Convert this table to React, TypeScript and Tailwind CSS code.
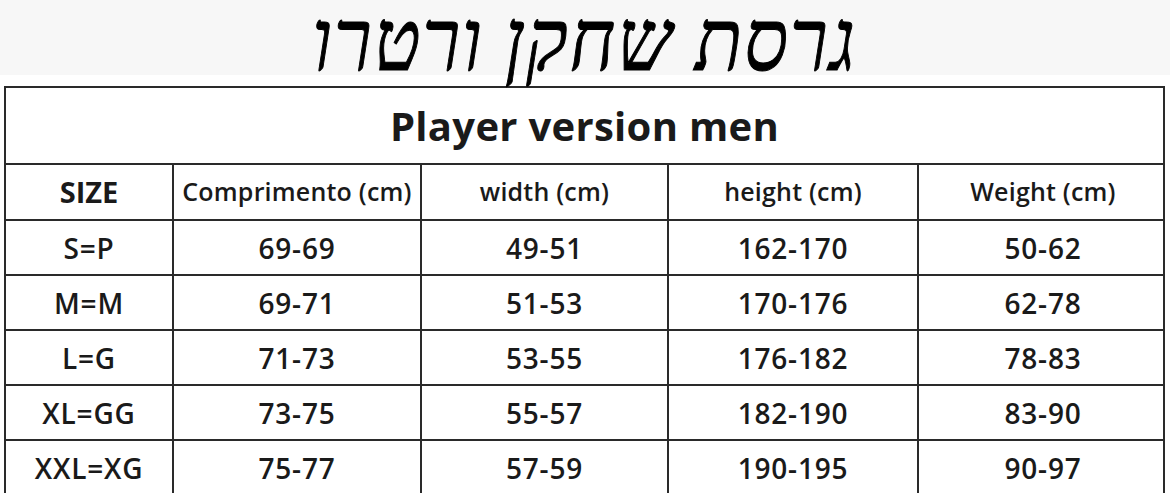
import React from "react";

const rows = [
  ["S=P", "69-69", "49-51", "162-170", "50-62"],
  ["M=M", "69-71", "51-53", "170-176", "62-78"],
  ["L=G", "71-73", "53-55", "176-182", "78-83"],
  ["XL=GG", "73-75", "55-57", "182-190", "83-90"],
  ["XXL=XG", "75-77", "57-59", "190-195", "90-97"],
];

const headers = ["Comprimento (cm)", "width (cm)", "height (cm)", "Weight (cm)"];

const cols = "grid grid-cols-[168px_248px_247px_250px_248px]";

const App = () => {
  return (
    <div className="w-[1170px] h-[493px] overflow-hidden bg-white font-['Open_Sans',sans-serif] text-[#1a1a1a]">
      {/* grey band is only 75px tall, the title's descenders run into the white below */}
      <div className="h-[86px] bg-[linear-gradient(#f7f7f7_75px,#ffffff_75px)] flex items-start justify-center">
        <h1
          dir="rtl"
          className="text-[86px] leading-[82px] italic font-['Liberation_Serif','DejaVu_Serif',serif] text-black tracking-[2px] scale-x-[0.9] [-webkit-text-stroke:1px_black]"
        >
          גרסת שחקן ורטרו
        </h1>
      </div>

      <div className="ml-[4px] w-[1161px] border-2 border-[#2a2a2a] border-b-0">
        <div className="h-[77px] flex items-center justify-center border-b-2 border-[#2a2a2a]">
          <span className="text-[40px] font-bold tracking-[0.3px]">Player version men</span>
        </div>

        <div className={`${cols} h-[56px] border-b-2 border-[#2a2a2a]`}>
          <div className="flex items-center justify-center border-r-2 border-[#2a2a2a] text-[29px] font-bold">
            SIZE
          </div>
          {headers.map((h, i) => (
            <div
              key={h}
              className={`flex items-center justify-center text-[25px] font-semibold tracking-[0.2px] ${
                i < headers.length - 1 ? "border-r-2 border-[#2a2a2a]" : ""
              }`}
            >
              {h}
            </div>
          ))}
        </div>

        {rows.map((r) => (
          <div key={r[0]} className={`${cols} h-[55px] border-b-2 border-[#2a2a2a]`}>
            {r.map((c, i) => (
              <div
                key={i}
                className={`flex items-center justify-center text-[28px] font-semibold tracking-[0.8px] ${
                  i < r.length - 1 ? "border-r-2 border-[#2a2a2a]" : ""
                }`}
              >
                {c}
              </div>
            ))}
          </div>
        ))}
      </div>
    </div>
  );
};

export default App;
